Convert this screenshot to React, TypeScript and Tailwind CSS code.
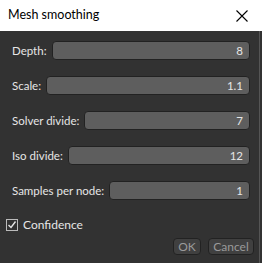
import React from "react";

const rows = [
  { label: "Depth:", value: "8" },
  { label: "Scale:", value: "1.1" },
  { label: "Solver divide:", value: "7" },
  { label: "Iso divide:", value: "12" },
  { label: "Samples per node:", value: "1" },
];

export default function App() {
  return (
    <div className="w-[262px] h-[263px] flex flex-col bg-[#323232] overflow-hidden" style={{ fontFamily: 'Lato, "Open Sans", sans-serif' }}>
      <div className="h-[31px] bg-white flex items-center justify-between pl-[8px] pr-[12px] shrink-0">
        <span className="text-[12.5px] text-black">Mesh smoothing</span>
        <svg width="12" height="12" viewBox="0 0 12 12" className="mr-[2px]">
          <path d="M0.5 0.5 L11.5 11.5 M11.5 0.5 L0.5 11.5" stroke="#000" strokeWidth="1.1" />
        </svg>
      </div>
      <div className="flex-1 flex border-r border-[#555] mr-[2px]">
        <div className="flex-1 flex flex-col pl-[12px] pr-[9px] pt-[10px]">
          {rows.map((r) => (
            <div key={r.label} className="flex items-center h-[19px] mb-[16px]">
              <span className="text-[11.5px] text-[#e6e6e6] mr-[5px] whitespace-nowrap">{r.label}</span>
              <div className="flex-1 h-[19px] rounded-[4px] bg-[#5e5e5e] border border-[#222] flex items-center justify-end pr-[6px] text-[11.5px] text-[#e6e6e6]">
                {r.value}
              </div>
            </div>
          ))}
          <div className="flex items-center -ml-[6px]">
            <div className="w-[12px] h-[12px] border border-[#bbb] flex items-center justify-center">
              <svg width="10" height="10" viewBox="0 0 10 10">
                <path d="M1.5 5 L4 7.5 L8.5 1.5" stroke="#e6e6e6" strokeWidth="1.4" fill="none" />
              </svg>
            </div>
            <span className="ml-[5px] text-[12px] text-[#e6e6e6]">Confidence</span>
          </div>
          <div className="flex justify-end gap-[7px] mt-[4px] -mr-[4px]">
            <div className="w-[28px] h-[17px] rounded-[4px] bg-[#404040] border border-[#222] flex items-center justify-center text-[12px] text-[#9a9a9a]">OK</div>
            <div className="w-[46px] h-[17px] rounded-[4px] bg-[#404040] border border-[#222] flex items-center justify-center text-[12px] text-[#9a9a9a]">Cancel</div>
          </div>
        </div>
      </div>
    </div>
  );
}
